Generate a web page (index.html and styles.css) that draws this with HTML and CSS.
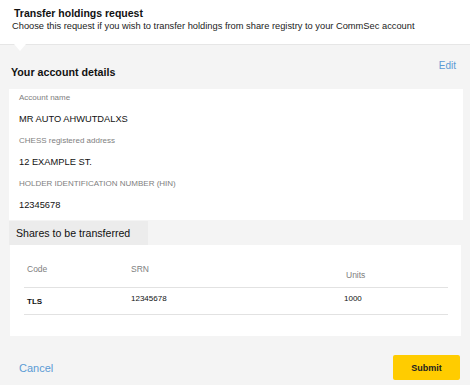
FILE: index.html
```html
<!DOCTYPE html>
<html lang="en">
<head>
<meta charset="UTF-8">
<meta name="viewport" content="width=device-width, initial-scale=1.0">
<title>Transfer holdings request</title>
<link rel="stylesheet" href="styles.css">
</head>
<body>

<div class="request-header">
    <h2>Transfer holdings request</h2>
    <p>Choose this request if you wish to transfer holdings from share registry to your CommSec account</p>
</div>

<div class="panel">
    <div class="notch"></div>

    <div class="section-head">
        <h3>Your account details</h3>
        <a href="#" class="link edit-link">Edit</a>
    </div>
    <div class="card details">
        <div class="field-label">Account name</div>
        <div class="field-value">MR AUTO AHWUTDALXS</div>
        <div class="field-label">CHESS registered address</div>
        <div class="field-value">12 EXAMPLE ST.</div>
        <div class="field-label">HOLDER IDENTIFICATION NUMBER (HIN)</div>
        <div class="field-value">12345678</div>
    </div>

    <div class="tab">Shares to be transferred</div>
    <div class="card shares">
        <table class="shares-table">
            <colgroup>
                <col class="col-code">
                <col class="col-srn">
                <col>
            </colgroup>
            <thead>
                <tr>
                    <th>Code</th>
                    <th>SRN</th>
                    <th class="units-head">Units</th>
                </tr>
            </thead>
            <tbody>
                <tr>
                    <td class="code-cell"><b>TLS</b></td>
                    <td>12345678</td>
                    <td>1000</td>
                </tr>
            </tbody>
        </table>
    </div>

    <div class="actions">
        <a href="#" class="link cancel-link">Cancel</a>
        <button class="btn-submit">Submit</button>
    </div>
</div>

</body>
</html>
```

FILE: styles.css
```css
/* Global Styles */
body {
    font-family: "Liberation Sans", Arial, sans-serif;
    margin: 0;
    background-color: #fff;
    color: #111;
}

.request-header {
    padding: 7px 14px 0 12px;
    height: 37px;
}

.request-header h2 {
    font-size: 10.5px;
    margin: 0 0 0 2px;
    line-height: 13px;
}

.request-header p {
    font-size: 9.3px;
    margin: 0;
    line-height: 13px;
    color: #222;
}

.panel {
    position: relative;
    width: 470px;
    height: 341px;
    background-color: #f4f4f4;
    border-top: 1px solid #e6e6e6;
    box-sizing: border-box;
}

.notch {
    position: absolute;
    left: 14px;
    top: -1px;
    width: 0;
    height: 0;
    border-left: 6px solid transparent;
    border-right: 6px solid transparent;
    border-top: 7px solid #fff;
}

.section-head {
    display: flex;
    justify-content: space-between;
    padding: 15px 14px 0 11px;
    height: 29px;
}

.section-head h3 {
    font-size: 10.7px;
    margin: 5px 0 0 0;
    line-height: 14px;
}

.link {
    color: #5b9bd5;
    text-decoration: none;
    font-size: 10px;
}

.edit-link {
    line-height: 12px;
}

.card {
    background-color: #fff;
    margin: 0 7px 0 9px;
}

.details {
    padding: 3px 10px 0 10px;
    height: 131px;
    box-sizing: border-box;
}

.field-label {
    font-size: 8px;
    color: #808080;
    line-height: 11px;
    margin-bottom: 10px;
}

.field-value {
    font-size: 9.3px;
    line-height: 12px;
    margin-bottom: 10px;
}

.tab {
    display: inline-block;
    margin: 1px 0 0 9px;
    width: 139px;
    height: 24px;
    line-height: 24px;
    padding-left: 7px;
    box-sizing: border-box;
    background-color: #ececec;
    font-size: 10.6px;
}

.shares {
    margin: 0 9px 0 10px;
    padding: 14px 13px 22px 14px;
    height: 91px;
    box-sizing: border-box;
}

.shares-table {
    width: 100%;
    table-layout: fixed;
    border-collapse: collapse;
    font-size: 8px;
}

.shares-table .col-code {
    width: 104px;
}

.shares-table .col-srn {
    width: 213px;
}

.shares-table th {
    font-weight: normal;
    font-size: 8.5px;
    color: #808080;
    text-align: left;
    vertical-align: top;
    padding: 5px 3px 0 3px;
    height: 23px;
    border-bottom: 1px solid #e2e2e2;
}

.shares-table th.units-head {
    padding: 11px 3px 0 5px;
    height: 17px;
}

.shares-table td {
    vertical-align: top;
    padding: 6px 3px 0 3px;
    height: 20px;
    border-bottom: 1px solid #e2e2e2;
}

.shares-table td.code-cell {
    padding-top: 9px;
    height: 17px;
}

.actions {
    display: flex;
    justify-content: space-between;
    align-items: center;
    padding: 19px 10px 0 19px;
}

.cancel-link {
    font-size: 11px;
}

.btn-submit {
    background-color: #ffcc00;
    color: #222;
    font-family: inherit;
    font-weight: bold;
    font-size: 9px;
    width: 67px;
    height: 25px;
    border: none;
    border-radius: 2px;
    cursor: pointer;
}
```
